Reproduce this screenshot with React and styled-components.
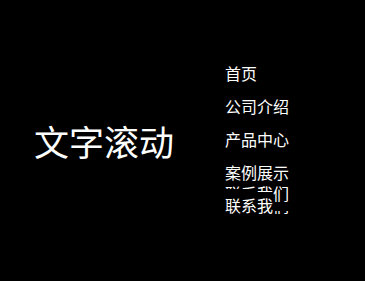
import React from "react";
import styled, { createGlobalStyle } from "styled-components";

const GlobalStyle = createGlobalStyle`
  html, body {
    margin: 0;
    padding: 0;
    background: #000;
  }
  body {
    font-family: "Noto Sans CJK SC", "Noto Sans", sans-serif;
    color: #fff;
  }
`;

const StyledPage = styled.div`
  display: grid;
  grid-template-columns: 225px 1fr;
  height: 281px;
  background: #000;
  overflow: hidden;
`;

const StyledTitle = styled.h1`
  align-self: center;
  margin: 0;
  padding-left: 34px;
  font-size: 35px;
  font-weight: 400;
  line-height: 1;
  color: #fff;
  white-space: nowrap;
`;

const StyledMenu = styled.ul`
  align-self: start;
  list-style: none;
  margin: 57px 0 0;
  padding: 0;
  height: 162px;
  overflow: hidden;
`;

const StyledMenuItem = styled.li`
  position: relative;
  height: 33px;
  font-size: 16px;
  line-height: 33px;
  color: #fff;
  white-space: nowrap;
`;

const StyledMenuText = styled.span`
  display: block;
  width: 64px;
  clip-path: ${(p) => p.$clip || "none"};
`;

// scrolling copy that sits over the last row, only partly painted
const StyledGhostText = styled(StyledMenuText)`
  position: absolute;
  left: 0;
  top: ${(p) => p.$offset}px;
`;

const ghostClip =
  "polygon(0 9px, 48px 9px, 48px 0, 64px 0, 64px 26px, 48px 26px, 48px 15px, 31px 15px, 31px 12px, 0 12px)";
const rowClip =
  "polygon(0 0, 48px 0, 48px 22px, 100% 22px, 100% 100%, 0 100%)";

const menu = ["首页", "公司介绍", "产品中心", "案例展示"];

const App = () => {
  return (
    <>
      <GlobalStyle />
      <StyledPage>
        <StyledTitle>文字滚动</StyledTitle>
        <StyledMenu>
          {menu.map((item) => (
            <StyledMenuItem key={item}>
              <StyledMenuText>{item}</StyledMenuText>
            </StyledMenuItem>
          ))}
          <StyledMenuItem>
            <StyledMenuText $clip={rowClip}>联系我们</StyledMenuText>
            <StyledGhostText $offset={-12} $clip={ghostClip}>
              联系我们
            </StyledGhostText>
          </StyledMenuItem>
        </StyledMenu>
      </StyledPage>
    </>
  );
};

export default App;
